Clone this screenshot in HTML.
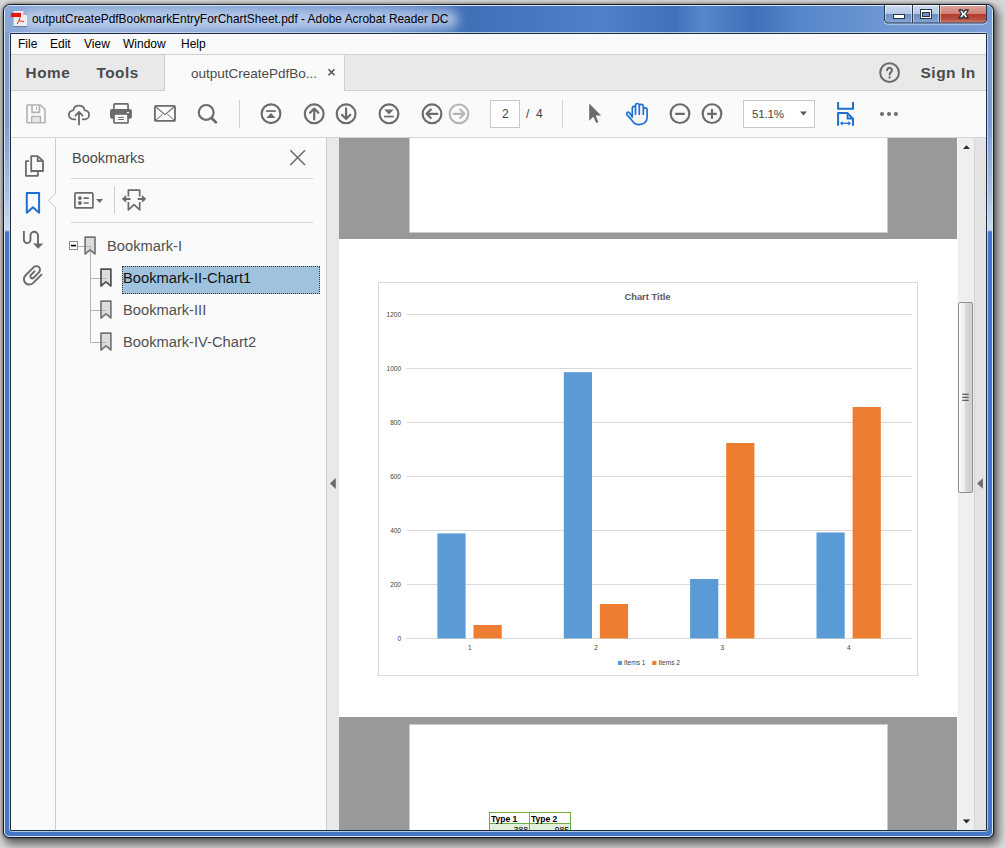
<!DOCTYPE html>
<html><head><meta charset="utf-8">
<style>
*{margin:0;padding:0;box-sizing:border-box}
html,body{width:1005px;height:848px;overflow:hidden;background:#e4e4e4;font-family:"Liberation Sans",sans-serif}
.a{position:absolute}
.t{position:absolute;white-space:nowrap;line-height:1}
#bg{left:0;top:0;width:1005px;height:848px;background:#d8d8d8}
#win{left:3px;top:4px;width:991px;height:834px;border:1px solid #141c28;border-radius:7px 7px 6px 6px;
 background:#4677c4;
 box-shadow:0 0 3px 1px rgba(0,0,0,.32),3px 5px 9px 2px rgba(0,0,0,.5)}
#ttl{left:5px;top:6px;width:987px;height:27px;border-radius:5px 5px 0 0;
 background:linear-gradient(90deg,#8aa7d6 0.0%,#86a4d5 19.8%,#7193cf 38.0%,#4170b7 47.1%,#4877c0 53.2%,#5081c8 60.3%,#4070b9 67.9%,#5787cc 70.6%,#3f70b8 75.7%,#5686cb 80.5%,#6c96d3 88.7%,#7a9ed5 100.0%)}
#lb{left:5px;top:32px;width:5px;height:200px;background:linear-gradient(180deg,#7f9fd2 0,#7c9cd0 45%,#a9c0e4 80%,#cad9ef 99%,#4677c4 100%)}
#rb{left:987px;top:32px;width:5px;height:200px;background:linear-gradient(180deg,#7f9fd2 0,#7c9cd0 45%,#a9c0e4 80%,#cad9ef 99%,#4677c4 100%)}
#winhl{left:4px;top:5px;width:989px;height:832px;border:1px solid rgba(255,255,255,.8);border-radius:6px 6px 5px 5px}
#clhl{left:9px;top:32px;width:979px;height:800px;border:1px solid rgba(215,228,245,.75);border-radius:3px}
#client{left:10px;top:33px;width:977px;height:798px;border:1px solid #1d2b42;background:#fafafa;border-radius:1px}
.menu{font-size:12px;color:#000;top:38px}
</style></head><body>
<div id="bg" class="a"></div>
<div id="win" class="a"></div>
<div id="ttl" class="a"></div>
<div id="lb" class="a"></div>
<div id="rb" class="a"></div>
<div id="winhl" class="a"></div>
<div id="clhl" class="a"></div>
<!-- title -->
<div class="a" style="left:24px;top:10px;width:434px;height:19px;background:rgba(215,228,246,.6);filter:blur(4.5px);border-radius:9px"></div>
<div class="t" style="left:32px;top:14px;font-size:11.9px;color:#000">outputCreatePdfBookmarkEntryForChartSheet.pdf - Adobe Acrobat Reader DC</div>

<div id="client" class="a"></div>

<!-- menu bar -->
<div class="a" style="left:11px;top:34px;width:975px;height:20px;background:#f9f9f9"></div>
<div class="a" style="left:11px;top:54px;width:975px;height:1px;background:#cfcfcf"></div>
<div class="t menu" style="left:18px">File</div>
<div class="t menu" style="left:50px">Edit</div>
<div class="t menu" style="left:84px">View</div>
<div class="t menu" style="left:123px">Window</div>
<div class="t menu" style="left:181px">Help</div>

<!-- tab bar -->
<div class="a" style="left:11px;top:55px;width:154px;height:36px;background:#e9e9e9;border-bottom:1px solid #cfcfcf;border-right:1px solid #cfcfcf"></div>
<div class="a" style="left:165px;top:55px;width:179px;height:36px;background:#fafafa"></div>
<div class="a" style="left:344px;top:55px;width:642px;height:36px;background:#e9e9e9;border-bottom:1px solid #cfcfcf;border-left:1px solid #cfcfcf"></div>
<div class="t" style="left:25.5px;top:65px;font-size:15.3px;letter-spacing:0.6px;font-weight:bold;color:#4b4b4b">Home</div>
<div class="t" style="left:96.5px;top:65px;font-size:15.3px;letter-spacing:0.5px;font-weight:bold;color:#4b4b4b">Tools</div>
<div class="t" style="left:191px;top:67px;font-size:13.5px;color:#4b4b4b">outputCreatePdfBo...</div>
<div class="t" style="left:920.5px;top:65px;font-size:15.5px;letter-spacing:0.5px;font-weight:bold;color:#4b4b4b">Sign In</div>

<!-- toolbar -->
<div class="a" style="left:11px;top:91px;width:975px;height:47px;background:#fafafa;border-bottom:1px solid #d4d4d4"></div>
<div class="a" style="left:490px;top:100px;width:30px;height:28px;background:#fff;border:1px solid #c8c8c8"></div>
<div class="t" style="left:502px;top:108px;font-size:12px;color:#444">2</div>
<div class="t" style="left:526px;top:108px;font-size:12px;color:#444">/&nbsp;&nbsp;4</div>
<div class="a" style="left:743px;top:100px;width:72px;height:28px;background:#fff;border:1px solid #c8c8c8"></div>
<div class="t" style="left:752px;top:108px;font-size:11.6px;color:#444;letter-spacing:-0.2px">51.1%</div>

<!-- left panels -->
<div class="a" style="left:326px;top:138px;width:1px;height:692px;background:#cccccc"></div>
<div class="a" style="left:327px;top:138px;width:12px;height:692px;background:#e9e9e9"></div>
<div class="t" style="left:72px;top:151px;font-size:14.5px;color:#4b4b4b">Bookmarks</div>
<div class="a" style="left:71px;top:178px;width:242px;height:1px;background:#d4d4d4"></div>
<div class="a" style="left:71px;top:222px;width:242px;height:1px;background:#d4d4d4"></div>
<div class="a" style="left:122px;top:266px;width:198px;height:28px;background:#9fc3de;border:1px dotted #3a3a3a"></div>
<div class="t" style="left:107px;top:239px;font-size:14.7px;color:#505050">Bookmark-I</div>
<div class="t" style="left:123px;top:271px;font-size:14.7px;color:#111">Bookmark-II-Chart1</div>
<div class="t" style="left:123px;top:303px;font-size:14.7px;color:#505050">Bookmark-III</div>
<div class="t" style="left:123px;top:335px;font-size:14.7px;color:#505050">Bookmark-IV-Chart2</div>

<!-- document area -->
<div class="a" style="left:339px;top:138px;width:618px;height:692px;background:#999999"></div>
<div class="a" style="left:409px;top:138px;width:479px;height:95px;background:#fff;border:1px solid #cccccc;border-top:0"></div>
<div class="a" style="left:339px;top:239px;width:618px;height:478px;background:#fff"></div>
<div class="a" style="left:409px;top:724px;width:479px;height:106px;background:#fff;border:1px solid #cccccc;border-bottom:0"></div>
<svg class="a" style="left:0;top:0" width="1005" height="848" viewBox="0 0 1005 848">
<defs><clipPath id="docclip"><rect x="339" y="138" width="618" height="692"/></clipPath></defs>
<g clip-path="url(#docclip)">
<rect x="378.5" y="282.5" width="539" height="393" fill="#fff" stroke="#d9d9d9" stroke-width="1"/>
<path d="M406.5,638.5 H912" stroke="#d9d9d9" stroke-width="1"/>
<path d="M406.5,584.5 H912" stroke="#d9d9d9" stroke-width="1"/>
<path d="M406.5,530.5 H912" stroke="#d9d9d9" stroke-width="1"/>
<path d="M406.5,476.5 H912" stroke="#d9d9d9" stroke-width="1"/>
<path d="M406.5,422.5 H912" stroke="#d9d9d9" stroke-width="1"/>
<path d="M406.5,368.5 H912" stroke="#d9d9d9" stroke-width="1"/>
<path d="M406.5,314.5 H912" stroke="#d9d9d9" stroke-width="1"/>
<text x="401" y="640.8" font-family="Liberation Sans" font-size="6.5" fill="#404040" text-anchor="end">0</text>
<text x="401" y="586.8" font-family="Liberation Sans" font-size="6.5" fill="#404040" text-anchor="end">200</text>
<text x="401" y="532.8" font-family="Liberation Sans" font-size="6.5" fill="#404040" text-anchor="end">400</text>
<text x="401" y="478.8" font-family="Liberation Sans" font-size="6.5" fill="#404040" text-anchor="end">600</text>
<text x="401" y="424.8" font-family="Liberation Sans" font-size="6.5" fill="#404040" text-anchor="end">800</text>
<text x="401" y="370.8" font-family="Liberation Sans" font-size="6.5" fill="#404040" text-anchor="end">1000</text>
<text x="401" y="316.8" font-family="Liberation Sans" font-size="6.5" fill="#404040" text-anchor="end">1200</text>
<rect x="437.4" y="533.4" width="28.2" height="105.0" fill="#5b9bd5"/>
<rect x="473.5" y="625.0" width="28.2" height="13.4" fill="#ed7d31"/>
<rect x="563.8" y="372.2" width="28.2" height="266.2" fill="#5b9bd5"/>
<rect x="599.9" y="604.0" width="28.2" height="34.4" fill="#ed7d31"/>
<rect x="690.1" y="579.0" width="28.2" height="59.4" fill="#5b9bd5"/>
<rect x="726.2" y="443.0" width="28.2" height="195.4" fill="#ed7d31"/>
<rect x="816.5" y="532.5" width="28.2" height="105.9" fill="#5b9bd5"/>
<rect x="852.6" y="407.0" width="28.2" height="231.4" fill="#ed7d31"/>
<text x="469.7" y="649.5" font-family="Liberation Sans" font-size="6.5" fill="#404040" text-anchor="middle">1</text>
<text x="596.1" y="649.5" font-family="Liberation Sans" font-size="6.5" fill="#404040" text-anchor="middle">2</text>
<text x="722.4" y="649.5" font-family="Liberation Sans" font-size="6.5" fill="#404040" text-anchor="middle">3</text>
<text x="848.8" y="649.5" font-family="Liberation Sans" font-size="6.5" fill="#404040" text-anchor="middle">4</text>
<text x="647.5" y="299.5" font-family="Liberation Sans" font-size="9.4" font-weight="bold" fill="#595959" text-anchor="middle">Chart Title</text>
<rect x="617.9" y="660.9" width="4.1" height="4.1" fill="#5b9bd5"/>
<text x="624" y="665" font-family="Liberation Sans" font-size="6.5" fill="#404040">Items 1</text>
<rect x="652.3" y="660.9" width="4.1" height="4.1" fill="#ed7d31"/>
<text x="658.5" y="665" font-family="Liberation Sans" font-size="6.5" fill="#404040">Items 2</text>
<rect x="489.5" y="812.5" width="81" height="11" fill="#fff" stroke="#70ad47"/>
<rect x="489.5" y="823.5" width="81" height="10" fill="#e2efda" stroke="#70ad47"/>
<path d="M529.5,812.5 V830" stroke="#70ad47"/>
<text x="491" y="821.5" font-family="Liberation Sans" font-size="8.5" font-weight="bold" fill="#000">Type 1</text>
<text x="531" y="821.5" font-family="Liberation Sans" font-size="8.5" font-weight="bold" fill="#000">Type 2</text>
<text x="528" y="833" font-family="Liberation Sans" font-size="8.5" fill="#000" text-anchor="end">388</text>
<text x="569" y="833" font-family="Liberation Sans" font-size="8.5" fill="#000" text-anchor="end">985</text>
</g></svg>
<!-- scrollbar -->
<div class="a" style="left:957px;top:138px;width:18px;height:692px;background:#efefef;border-left:1px solid #fafafa;border-right:1px solid #d6d6d6"></div>
<div class="a" style="left:975px;top:138px;width:11px;height:692px;background:#e3e3e3"></div>
<div class="a" style="left:958px;top:302px;width:15px;height:191px;border:1px solid #8e8e8e;border-radius:2px;background:linear-gradient(90deg,#fbfbfb 0,#ececec 45%,#dadadc 50%,#cfcfd3 90%,#dcdcdc 100%)"></div>

<!-- icons overlay -->
<svg class="a" style="left:0;top:0" width="1005" height="848" viewBox="0 0 1005 848" fill="none" stroke-linecap="butt">
<!-- toolbar: save -->
<g stroke="#b2b2b2" stroke-width="1.6" stroke-linejoin="round">
<path d="M27,105 H40.5 L45,109.5 V122.8 H27 Z"/>
<path d="M32,105 V112.4 H39.5 V105"/>
<path d="M31.9,122.8 V116.6 H40.3 V122.8"/>
</g>
<rect x="32.6" y="117.3" width="7" height="4.8" fill="#e8e8e8"/>
<rect x="36" y="107" width="1" height="3" fill="#b2b2b2"/>
<!-- cloud upload -->
<g stroke="#6b6b6b" stroke-width="1.8" stroke-linejoin="round" stroke-linecap="round">
<path d="M75.3,119.4 H73.6 A4.55,4.55 0 0 1 73.3,110.3 A5.8,5.8 0 0 1 84.7,110.3 A4.55,4.55 0 0 1 84.4,119.4 H82.7"/>
<path d="M79,124.6 V112 M75.4,115.6 L79,112 L82.6,115.6"/>
</g>
<!-- printer -->
<g fill="#6b6b6b">
<path d="M113.1,109.1 V104.6 A1.5,1.5 0 0 1 114.6,103.1 H127.4 A1.5,1.5 0 0 1 128.9,104.6 V109.1 H127.2 V104.8 H114.8 V109.1 Z"/>
<rect x="110" y="109.1" width="21.9" height="9.7" rx="2"/>
<path d="M113.1,114.6 H128.9 V122.3 A1.5,1.5 0 0 1 127.4,123.8 H114.6 A1.5,1.5 0 0 1 113.1,122.3 Z"/>
</g>
<rect x="114.8" y="114.8" width="12.4" height="7.3" fill="#fafafa"/>
<rect x="118.2" y="116.9" width="5.6" height="1" fill="#6b6b6b"/>
<rect x="118.2" y="119" width="5.6" height="1" fill="#6b6b6b"/>
<rect x="126.8" y="112" width="2.3" height="1" fill="#fff"/>
<!-- mail -->
<g stroke="#6b6b6b" stroke-linejoin="round">
<rect x="154.9" y="105.9" width="20.1" height="15" rx="1" stroke-width="1.8"/>
<path d="M156,107 L165,114.6 L174,107" stroke-width="1.1"/>
<path d="M156,120 L162.6,114.2 M174,120 L167.4,114.2" stroke-width="1"/>
</g>
<!-- search -->
<g stroke="#6b6b6b" stroke-linecap="round">
<circle cx="206.2" cy="112.4" r="7.4" stroke-width="2.2"/>
<path d="M211.6,118 L215.8,122.2" stroke-width="2.8"/>
</g>
<rect x="239" y="100" width="1" height="28" fill="#d2d2d2"/>
<!-- nav circles -->
<g stroke="#6b6b6b" stroke-width="2.15">
<circle cx="271" cy="113.7" r="9.35"/>
<circle cx="314.2" cy="113.8" r="9.4"/>
<circle cx="346.1" cy="113.8" r="9.4"/>
<circle cx="389" cy="113.8" r="9.4"/>
<circle cx="432" cy="113.8" r="9.4"/>
</g>
<circle cx="459" cy="113.8" r="9.35" stroke="#b5b5b5" stroke-width="2.15"/>
<g fill="#6b6b6b">
<rect x="266.1" y="110.2" width="9.7" height="1.7"/>
<path d="M271,113 L275.6,118 H266.3 Z"/>
<rect x="384.1" y="115.7" width="9.7" height="1.7"/>
<path d="M389,114.5 L393.6,109.5 H384.3 Z"/>
</g>
<g stroke="#6b6b6b" stroke-width="2.15" stroke-linecap="round" stroke-linejoin="round">
<path d="M314.2,119.4 V108.6 M310,112.8 L314.2,108.6 L318.4,112.8"/>
<path d="M346.1,108.2 V119 M341.9,114.8 L346.1,119 L350.3,114.8"/>
<path d="M437.4,113.8 H426.6 M430.8,109.6 L426.6,113.8 L430.8,118"/>
</g>
<path d="M453.6,113.8 H464.4 M460.2,109.6 L464.4,113.8 L460.2,118" stroke="#b5b5b5" stroke-width="2.15" stroke-linecap="round" stroke-linejoin="round"/>
<rect x="562" y="100" width="1" height="28" fill="#d2d2d2"/>
<!-- select arrow -->
<path d="M589.2,103.5 L601.1,115.6 H595.6 L598.4,121.9 L596.2,123.1 L593.4,116.8 L589.2,120.8 Z" fill="#6b6b6b"/>
<!-- hand -->
<path d="M632.3,117 V107.9 A1.6,1.6 0 0 1 635.5,107.9 V114.2 M635.5,107.9 V105.4 A1.9,1.9 0 0 1 639.3,105.4 V114.2 M639.3,106.4 A2,2 0 0 1 643.3,106.4 V114.2 M643.3,109.7 A1.9,1.9 0 0 1 647.1,109.7 V117.5 C647.1,121.8 643.6,124.6 639.2,124.6 C635.6,124.6 633.2,122.6 631.6,119.8 L627,114.8 A1.6,1.6 0 0 1 629.3,112.6 L632.3,117" stroke="#1f6fd0" stroke-width="1.7" stroke-linejoin="round" stroke-linecap="round"/>
<!-- zoom out/in -->
<g stroke="#6b6b6b" stroke-width="2.15">
<circle cx="680" cy="113.6" r="9.35"/>
<circle cx="712" cy="113.6" r="9.35"/>
<path d="M675.2,113.9 H684.8 M707.2,113.9 H716.8 M712,109.1 V118.7" stroke-width="2.1"/>
</g>
<path d="M800,111.5 H807 L803.5,115.5 Z" fill="#555"/>
<!-- fit width -->
<g stroke="#1f6fd0" stroke-width="2" fill="none">
<path d="M838.1,102 V108.7 H853 V102"/>
<path d="M838.1,125.7 V113 H847.3 L853,118.7 V125.7"/>
<path d="M847.5,113 V118.5 H853" stroke-width="1.8"/>
<path d="M841.5,123.3 H849.5" stroke-width="1.3"/>
</g>
<path d="M840,123.3 L842.6,120.9 V125.7 Z M851,123.3 L848.4,120.9 V125.7 Z" fill="#1f6fd0"/>
<g fill="#6b6b6b">
<circle cx="882" cy="113.9" r="2"/>
<circle cx="889" cy="113.9" r="2"/>
<circle cx="895.9" cy="113.9" r="2"/>
</g>
<!-- tab close x -->
<path d="M328.5,69.3 L334.5,75.3 M334.5,69.3 L328.5,75.3" stroke="#555" stroke-width="1.6"/>
<!-- help -->
<circle cx="889.55" cy="72.65" r="9.35" stroke="#6b6b6b" stroke-width="2"/>
<path d="M887.1,70.3 A2.4,2.4 0 1 1 891.3,71.8 C890.2,72.6 889.6,73.1 889.6,74.4" stroke="#6b6b6b" stroke-width="2.1" stroke-linecap="round"/><circle cx="889.6" cy="77.5" r="1.15" fill="#6b6b6b"/>
</svg>
<!-- frame overlay 2 -->
<svg class="a" style="left:0;top:0" width="1005" height="848" viewBox="0 0 1005 848" fill="none">
<defs>
<linearGradient id="gmin" x1="0" y1="0" x2="0" y2="1">
<stop offset="0" stop-color="#cad8ee"/><stop offset="0.47" stop-color="#b4c7e5"/><stop offset="0.5" stop-color="#6f8fc0"/><stop offset="1" stop-color="#86a6d8"/></linearGradient>
<linearGradient id="gcls" x1="0" y1="0" x2="0" y2="1">
<stop offset="0" stop-color="#dca39b"/><stop offset="0.45" stop-color="#cf8276"/><stop offset="0.5" stop-color="#b63b2b"/><stop offset="0.8" stop-color="#b65345"/><stop offset="1" stop-color="#d08a7c"/></linearGradient>
</defs>
<!-- caption buttons -->
<path d="M884.5,6 V20 A3,3 0 0 0 887.5,23 H912 V6 Z" fill="url(#gmin)"/>
<rect x="912.5" y="6" width="26.5" height="17" fill="url(#gmin)"/>
<path d="M939.5,6 V23 H983.5 A3,3 0 0 0 986.5,20 V6 Z" fill="url(#gcls)"/>
<path d="M885,5.5 H986.5" stroke="rgba(255,255,255,.85)" stroke-width="1"/>
<path d="M884.5,5 V20 A3,3 0 0 0 887.5,23 H983.5 A3,3 0 0 0 986.5,20 V5" stroke="#2c3a52" stroke-width="1"/>
<path d="M912.5,5 V23 M939.5,5 V23" stroke="#2c3a52" stroke-width="1"/>
<path d="M884,21 A3.5,3.5 0 0 0 887.5,24.2 H983.5 A3.5,3.5 0 0 0 987,21" stroke="rgba(225,235,250,.7)" stroke-width="1"/>
<path d="M913.5,5.5 V22.5 M938.5,5.5 V22.5 M940.5,5.5 V22.5 M885.5,5.5 V20 M911.5,5.5 V22.5" stroke="rgba(255,255,255,.45)" stroke-width="1"/>
<!-- min glyph -->
<rect x="893.5" y="14.5" width="11" height="4" fill="#fff" stroke="#2a3346" stroke-width="1"/>
<!-- max glyph -->
<rect x="920.5" y="9.5" width="11" height="9" fill="#fff" stroke="#2a3346" stroke-width="1"/>
<rect x="922.5" y="12.5" width="7" height="4" fill="#6f8fc4" stroke="#2a3346" stroke-width="1"/>
<!-- close glyph -->
<path d="M959,10 H962.3 L963.65,12.2 L965,10 H968.3 L965.8,14 L968.3,18 H965 L963.65,15.8 L962.3,18 H959 L961.5,14 Z" fill="#fff" stroke="#2b303c" stroke-width="1.3" stroke-linejoin="round"/>
<!-- title icon -->
<path d="M13.6,11 H23.3 L27,14.9 V26 H13.6 Z" fill="#eeeeee"/>
<path d="M23.3,11 L27,14.9 H23.3 Z" fill="#a8a8a8"/>
<rect x="13.8" y="26" width="13.2" height="0.8" fill="#5a6f90"/>
<rect x="10.9" y="12.9" width="10.1" height="4.1" fill="#e41a00"/>
<path d="M20,17.5 C19.5,20 18.5,22 17.3,23.6 M19.4,20.5 C20.5,21 22,21.5 23.6,21.6" stroke="#e8413a" stroke-width="1.1" stroke-linecap="round"/>

<!-- left nav icons -->
<g stroke="#6b6b6b" stroke-width="1.8" stroke-linejoin="round">
<path d="M31.2,171.6 V156.1 H37.7 L43,161 V171 H31.2 Z"/>
<path d="M37.7,156.1 V161.2 H43"/>
<path d="M29,161.2 H25.9 V175.8 H37.9 V171.8"/>
</g>
<path d="M26.8,193 H39.1 V212.8 L32.95,207.2 L26.8,212.8 Z" stroke="#1f6fd0" stroke-width="2" stroke-linejoin="round"/>
<g stroke="#6b6b6b" stroke-width="1.9">
<path d="M23.9,231 V239.8 A3.3,3.3 0 0 0 30.5,239.8 V235.5 A3.75,3.75 0 0 1 38,235.5 V244"/>
<path d="M23.9,269.5 L23.9,269.5" />
</g>
<path d="M33,243.5 H43.3 L38.2,248.8 Z" fill="#6b6b6b"/>
<path d="M41.51,274.57 L32.99,283.09 A5.35,5.35 0 0 1 25.42,275.53 L33.76,267.18 A3.65,3.65 0 0 1 38.93,272.35 L33.59,277.69 A1.9,1.9 0 0 1 30.9,275 L34.51,271.39" stroke="#6b6b6b" stroke-width="1.95" stroke-linecap="round"/>
<!-- nav notch -->
<path d="M55.5,138 V193.5 L48.3,200.4 L55.5,207.2 V830" stroke="#cccccc" stroke-width="1"/>

<!-- bookmarks panel -->
<path d="M290.3,150.3 L305,165 M305,150.3 L290.3,165" stroke="#6b6b6b" stroke-width="1.6"/>
<rect x="74.9" y="192.9" width="18" height="15" rx="1" stroke="#6b6b6b" stroke-width="1.7"/>
<circle cx="79.9" cy="198.1" r="1.9" fill="#6b6b6b"/>
<circle cx="79.9" cy="203" r="1.9" fill="#6b6b6b"/>
<path d="M83.6,198.1 H88.8 M83.6,203 H88.8" stroke="#6b6b6b" stroke-width="1.6"/>
<path d="M96,199 H103.1 L99.55,203.1 Z" fill="#6b6b6b"/>
<rect x="114" y="186" width="1" height="28" fill="#d0d0d0"/>
<g stroke="#6b6b6b" stroke-width="1.7" stroke-linejoin="round">
<path d="M128.4,196.4 V190.2 H139.7 V196.4"/>
<path d="M128.4,202 V209.8 L134.05,204.6 L139.7,209.8 V202"/>
<path d="M124,198.9 H130.5 M137.7,198.9 H144" stroke-width="2"/>
</g>
<path d="M122.3,198.9 L125.8,195.8 V202 Z M145.8,198.9 L142.3,195.8 V202 Z" fill="#6b6b6b" stroke="#6b6b6b" stroke-width="0.9" stroke-linejoin="round"/>

<!-- tree lines -->
<path d="M78,246.5 H90.5 M90.5,250 V342.5 M90.5,278.5 H106 M90.5,310.5 H106 M90.5,342.5 H106" stroke="#b4b4b4" stroke-width="1"/>
<rect x="69.5" y="241.5" width="8" height="8" fill="#fff" stroke="#8e8e8e" stroke-width="1"/>
<rect x="71" y="244.8" width="5.1" height="1.6" fill="#000"/>
<g stroke="#767676" stroke-width="1.7" stroke-linejoin="round" fill="#dcdcdc">
<path d="M85.1,237.1 H95 V254 L90.05,249.8 L85.1,254 Z"/>
<path d="M101,269.1 H110.9 V286 L105.95,281.8 L101,286 Z" stroke="#505050"/>
<path d="M101,301.1 H110.9 V318 L105.95,313.8 L101,318 Z"/>
<path d="M101,333.1 H110.9 V350 L105.95,345.8 L101,350 Z"/>
</g>
<path d="M90.5,246.5 H85.9 M90.5,246.5 V249.5 M106,278.5 H101.9 M106,310.5 H101.9 M106,342.5 H101.9" stroke="#b4b4b4" stroke-width="1"/>

<!-- collapse triangles -->
<path d="M335.8,478 V489 L329.9,483.5 Z" fill="#6b6b6b"/>
<path d="M982.9,478.2 V488.7 L977.1,483.4 Z" fill="#6b6b6b"/>
<!-- scroll arrows -->
<path d="M963,148.9 H970 L966.5,145.2 Z" fill="#2a2a2a"/>
<path d="M962.8,819.5 H970.2 L966.5,823.6 Z" fill="#2a2a2a"/>
<path d="M962.2,394.2 H968.7 M962.2,397.2 H968.7 M962.2,400.2 H968.7" stroke="#3a3a3a" stroke-width="1.1"/>
</svg>
</body></html>
